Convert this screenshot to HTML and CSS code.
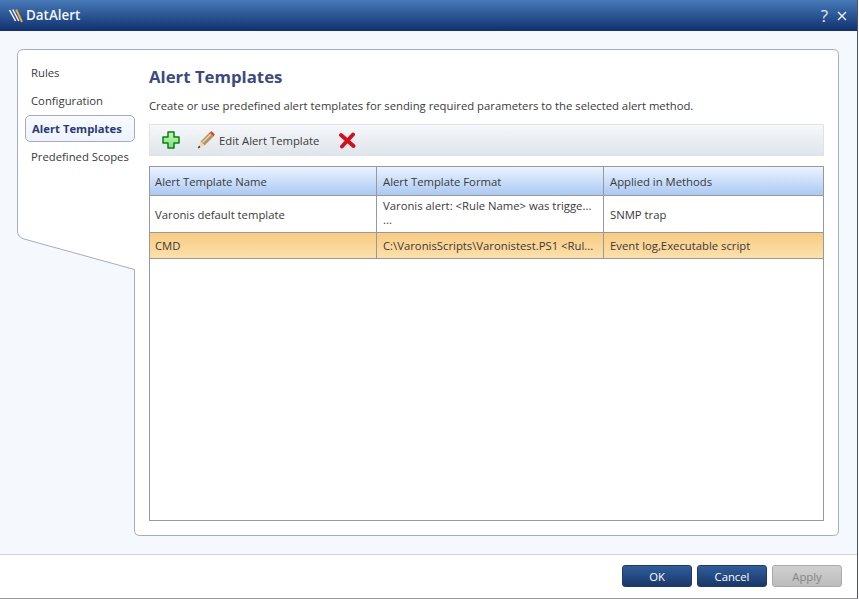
FILE: index.html
```html
<!DOCTYPE html>
<html lang="en">
<head>
<meta charset="utf-8">
<title>DatAlert</title>
<link rel="stylesheet" href="styles.css">
</head>
<body>
<div class="window">
  <header class="titlebar">
    <div class="brand">
      <svg class="logo" width="14" height="14" viewBox="0 0 14 14" aria-hidden="true">
        <path d="M.6 1 L6.6 12" stroke="#f4f6fa" stroke-width="1.5" fill="none"/>
        <path d="M3.8 .5 L9.8 12" stroke="#f4f6fa" stroke-width="1.5" fill="none"/>
        <path d="M7.2 .5 L13 13" stroke="#f5a92e" stroke-width="1.9" fill="none"/>
      </svg>
      <span class="brand-name">DatAlert</span>
    </div>
    <div class="title-actions">
      <span class="help">?</span>
      <svg width="10" height="10" viewBox="0 0 10 10" aria-hidden="true"><path d="M1 1 L9 9 M9 1 L1 9" stroke="#eef2f8" stroke-width="1.4" fill="none"/></svg>
    </div>
  </header>
  <main class="body">
    <div class="panel">
      <svg class="panel-shape" width="823" height="488" viewBox="0 0 823 488" aria-hidden="true">
        <path d="M6.5 .5 H816.5 Q821.5 .5 821.5 5.5 V481.5 Q821.5 486.5 816.5 486.5 H123 Q117.5 486.5 117.5 481 V220.5 L7 190 Q.5 188 .5 182 V6.5 Q.5 .5 6.5 .5 Z" fill="#fff" stroke="#a4abc4" stroke-width="1"/>
      </svg>
      <nav class="nav">
        <a class="nav-item">Rules</a>
        <a class="nav-item">Configuration</a>
        <a class="nav-item active">Alert Templates</a>
        <a class="nav-item">Predefined Scopes</a>
      </nav>
      <section class="content">
        <h1 class="heading">Alert Templates</h1>
        <p class="desc">Create or use predefined alert templates for sending required parameters to the selected alert method.</p>
        <div class="toolbar">
          <svg class="tool-add" width="18" height="18" viewBox="0 0 18 18" aria-hidden="true">
            <defs><linearGradient id="g" x1="0" y1="0" x2="0" y2="1"><stop offset="0" stop-color="#c4f7b0"/><stop offset="1" stop-color="#7ce578"/></linearGradient></defs>
            <path d="M6 1 H12 V6 H17 V12 H12 V17 H6 V12 H1 V6 H6 Z" fill="url(#g)" stroke="#0b7c18" stroke-width="1.5" stroke-linejoin="round"/>
          </svg>
          <button class="tool-edit" type="button">
            <svg width="18" height="18" viewBox="0 0 18 18" aria-hidden="true">
              <path d="M3.5 10.5 L12.5 1.5 L16.5 5.5 L7.5 14.5 Z" fill="#b8915f"/>
              <path d="M5.5 11.5 L14 3" stroke="#e6d2ac" stroke-width="1.6"/>
              <path d="M12.5 1.5 L14.5 .2 L17.8 3.2 L16.5 5.5 Z" fill="#dc4518"/>
              <path d="M3.5 10.5 L7.5 14.5 L1.5 17 Z" fill="#e9d9bd"/>
              <path d="M.8 17.6 L3.4 16.2 L2 14.6 Z" fill="#1c1c1c"/>
            </svg>
            <span>Edit Alert Template</span>
          </button>
          <svg class="tool-del" width="18" height="18" viewBox="0 0 18 18" aria-hidden="true">
            <path d="M3 4 L15.5 15 M15 3.5 L4 15.5" stroke="#d40f1c" stroke-width="3.8" stroke-linecap="round" fill="none"/>
          </svg>
        </div>
        <div class="table">
          <div class="row head">
            <div class="cell">Alert Template Name</div>
            <div class="cell">Alert Template Format</div>
            <div class="cell">Applied in Methods</div>
          </div>
          <div class="row tall">
            <div class="cell">Varonis default template</div>
            <div class="cell multi"><span>Varonis alert: &lt;Rule Name&gt; was trigge...</span><span>...</span></div>
            <div class="cell">SNMP trap</div>
          </div>
          <div class="row selected">
            <div class="cell">CMD</div>
            <div class="cell">C:\VaronisScripts\Varonistest.PS1 &lt;Rul...</div>
            <div class="cell">Event log,Executable script</div>
          </div>
        </div>
      </section>
    </div>
  </main>
  <footer class="footer">
    <button class="btn" type="button">OK</button>
    <button class="btn" type="button">Cancel</button>
    <button class="btn disabled" type="button">Apply</button>
  </footer>
</div>
</body>
</html>
```
FILE: styles.css
```css
* { box-sizing: border-box; }
html, body { margin: 0; padding: 0; background: #fff; }
body { width: 859px; height: 600px; overflow: hidden; font-family: "Open Sans", "Noto Sans", sans-serif; font-size: 11.3px; color: #3a3a3a; }
.window { width: 858px; height: 599px; border-right: 1px solid #4a5568; border-bottom: 1px solid #9a9a9a; display: flex; flex-direction: column; }
.titlebar { height: 31px; flex: none; display: flex; align-items: center; justify-content: space-between; padding: 0 10px 0 9px; background: linear-gradient(#477ab8, #10306f); color: #fff; }
.brand { display: flex; align-items: center; gap: 3px; }
.logo { display: block; }
.brand-name { font-size: 13.4px; line-height: 16px; margin-top: -2px; font-weight: 600; color: #f2f5fa; }
.title-actions { display: flex; align-items: center; gap: 9px; }
.help { font-size: 17px; line-height: 1; color: #e4ebf5; }
.body { height: 524px; flex: none; padding: 18px 0 0 17px; background: #f5f9fe; border-bottom: 1px solid #d2d2d2; }
.panel { position: relative; width: 823px; height: 488px; display: flex; }
.panel-shape { position: absolute; left: 0; top: 0; }
.nav { position: relative; width: 118px; padding: 9px 0 0 8px; flex: none; display: flex; flex-direction: column; }
.nav-item { height: 28px; padding-left: 6px; display: flex; align-items: center; }
.nav-item.active { width: 110px; height: 27px; margin-top: 1px; border: 1px solid #a4abc4; border-radius: 5px; background: linear-gradient(#f8fbff, #edf3fd); color: #2c3a78; font-weight: 700; }
.content { position: relative; flex: 1; padding: 0 16px 15px 14px; display: flex; flex-direction: column; }
.heading { margin: 16px 0 0; height: 24px; font-size: 16.8px; line-height: 24px; font-weight: 700; color: #3c4a82; }
.desc { margin: 9px 0 0; height: 16px; line-height: 16px; }
.toolbar { margin-top: 10px; height: 32px; display: flex; align-items: center; padding-left: 12px; background: linear-gradient(#f6f8fa, #dfe5ea); border: 1px solid #dfe3e8; }
.tool-edit { margin-left: 17px; padding: 0; border: 0; background: none; display: flex; align-items: center; gap: 4px; font: inherit; color: inherit; }
.tool-del { margin-left: 19px; }
.table { margin-top: 10px; height: 355px; border: 1px solid #999; background: #fff; }
.row { display: grid; grid-template-columns: 227px 227px 1fr; border-bottom: 1px solid #999; }
.cell { padding: 0 5px; display: flex; align-items: center; border-right: 1px solid #999; white-space: nowrap; overflow: hidden; }
.cell + .cell { padding-left: 6px; }
.cell:last-child { border-right: 0; }
.head { height: 29px; background: linear-gradient(#ebf4fe, #abc9f3); }
.tall { height: 37px; }
.multi { flex-direction: column; align-items: flex-start; justify-content: flex-start; line-height: 14px; padding-top: 3px; }
.selected { height: 26px; background: linear-gradient(#f9cb82, #fce0ab); }
.footer { flex: 1; display: flex; justify-content: flex-end; align-items: flex-start; gap: 5px; padding: 10px 15px 0 0; background: #fff; }
.btn { width: 70px; height: 22px; padding: 0; border: 1px solid #1c3a6e; border-radius: 3px; background: linear-gradient(#2f5e9c, #1b3768); color: #fff; font: inherit; }
.btn.disabled { border-color: #aaa; background: linear-gradient(#d0d0d0, #bcbcbc); color: #858585; }
```
